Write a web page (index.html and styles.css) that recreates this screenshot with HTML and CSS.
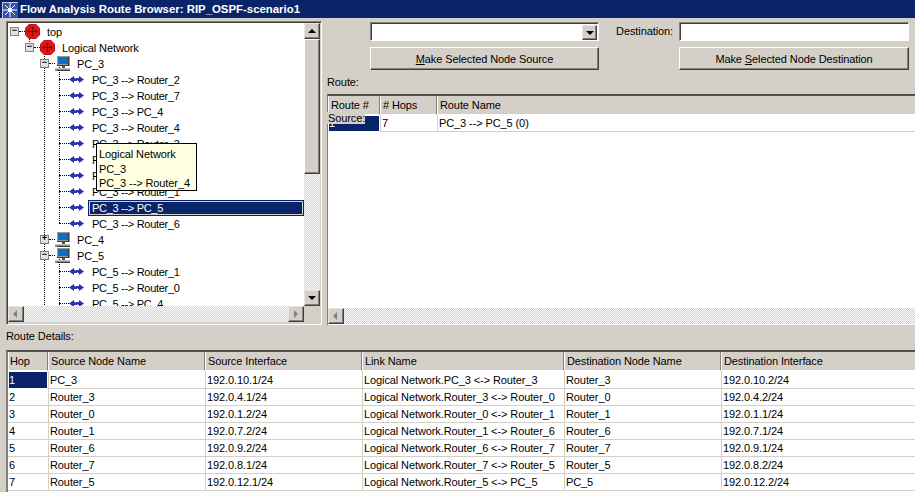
FILE: index.html
```html
<!DOCTYPE html>
<html lang="en">
<head>
<meta charset="utf-8">
<title>Flow Analysis Route Browser</title>
<link rel="stylesheet" href="styles.css">
</head>
<body>
<svg class="defs" width="0" height="0" aria-hidden="true">
  <symbol id="router" viewBox="0 0 15 15">
    <path d="M4.500 0h6L15 4.500v6L10.500 15h-6L0 10.500v-6z" fill="#e21414"/>
    <path d="M4.500 0h6L15 4.500v6L10.500 15h-6L0 10.500v-6z" fill="none" stroke="#a80808" stroke-width=".8"/>
    <path d="M7.500 3v9M3 7.500h9M6 4.500l1.500-1.500 1.500 1.500M6 10.500l1.500 1.500 1.500-1.500M4.500 6 3 7.500 4.500 9M10.500 6 12 7.500 10.500 9" fill="none" stroke="#5a0c0c" stroke-width=".9"/>
  </symbol>
  <symbol id="pc" viewBox="0 0 15 15">
    <path d="M2 0h13v10H2z" fill="#9a9a94"/>
    <path d="M3 1h10v7H3z" fill="#0f6fc6"/>
    <path d="M13 1h1v8h-1zM2 9h12v1H2z" fill="#3c3c3c"/>
    <path d="M7 10h3v2H7z" fill="#55554f"/>
    <path d="M0 12h15v3H0z" fill="#8f8f88"/>
    <path d="M0 12h15v1H0z" fill="#c8c8c0"/>
    <path d="M2 14h13v1H2z" fill="#3c3c3c"/>
  </symbol>
  <symbol id="flow" viewBox="0 0 15 7">
    <path d="M0 3.500 5 0v2h5V0l5 3.500L10 7V5H5v2z" fill="#2a2fb0"/>
    <path d="M6 2h1v1H6zM8 4h1v1H8z" fill="#a8aae4"/>
  </symbol>
</svg>

<header class="titlebar">
  <svg class="appicon" width="16" height="16" viewBox="0 0 16 16" aria-hidden="true">
    <rect width="16" height="16" fill="#3a4fb0"/>
    <rect x="0" y="0" width="16" height="1" fill="#c8c8e8"/>
    <rect x="0" y="0" width="1" height="16" fill="#c8c8e8"/>
    <path d="M8 1v14M1 8h14M3 3l10 10M13 3 3 13" stroke="#fff" stroke-width="1"/>
    <rect x="6" y="6" width="4" height="4" fill="#fff"/>
  </svg>
  <span class="titletext">Flow Analysis Route Browser: RIP_OSPF-scenario1</span>
</header>

<main class="top">
  <section class="treepanel">
    <div class="treebody">
      <div class="treeview">
        <i class="guide g-a"></i><i class="guide g-b"></i><i class="guide g-c"></i><i class="guide g-d"></i>
        <div class="row l0"><b class="exp">−</b><i class="stub"></i><svg class="ico"><use href="#router"/></svg><span class="lbl">top</span></div>
        <div class="row l1"><b class="exp">−</b><i class="stub"></i><svg class="ico"><use href="#router"/></svg><span class="lbl">Logical Network</span></div>
        <div class="row l2"><b class="exp">−</b><i class="stub"></i><svg class="ico"><use href="#pc"/></svg><span class="lbl">PC_3</span></div>
        <div class="row l3"><i class="lstub"></i><svg class="flow"><use href="#flow"/></svg><span class="leaf">PC_3 --&gt; Router_2</span></div>
        <div class="row l3"><i class="lstub"></i><svg class="flow"><use href="#flow"/></svg><span class="leaf">PC_3 --&gt; Router_7</span></div>
        <div class="row l3"><i class="lstub"></i><svg class="flow"><use href="#flow"/></svg><span class="leaf">PC_3 --&gt; PC_4</span></div>
        <div class="row l3"><i class="lstub"></i><svg class="flow"><use href="#flow"/></svg><span class="leaf">PC_3 --&gt; Router_4</span></div>
        <div class="row l3"><i class="lstub"></i><svg class="flow"><use href="#flow"/></svg><span class="leaf">PC_3 --&gt; Router_3</span></div>
        <div class="row l3"><i class="lstub"></i><svg class="flow"><use href="#flow"/></svg><span class="leaf">PC_3 --&gt; Router_0</span></div>
        <div class="row l3"><i class="lstub"></i><svg class="flow"><use href="#flow"/></svg><span class="leaf">PC_3 --&gt; Router_5</span></div>
        <div class="row l3"><i class="lstub"></i><svg class="flow"><use href="#flow"/></svg><span class="leaf">PC_3 --&gt; Router_1</span></div>
        <div class="row l3"><i class="lstub"></i><svg class="flow"><use href="#flow"/></svg><span class="leaf selected">PC_3 --&gt; PC_5</span></div>
        <div class="row l3"><i class="lstub"></i><svg class="flow"><use href="#flow"/></svg><span class="leaf">PC_3 --&gt; Router_6</span></div>
        <div class="row l2"><b class="exp">+</b><i class="stub"></i><svg class="ico"><use href="#pc"/></svg><span class="lbl">PC_4</span></div>
        <div class="row l2"><b class="exp">−</b><i class="stub"></i><svg class="ico"><use href="#pc"/></svg><span class="lbl">PC_5</span></div>
        <div class="row l3"><i class="lstub"></i><svg class="flow"><use href="#flow"/></svg><span class="leaf">PC_5 --&gt; Router_1</span></div>
        <div class="row l3"><i class="lstub"></i><svg class="flow"><use href="#flow"/></svg><span class="leaf">PC_5 --&gt; Router_0</span></div>
        <div class="row l3"><i class="lstub"></i><svg class="flow"><use href="#flow"/></svg><span class="leaf">PC_5 --&gt; PC_4</span></div>
        <div class="tooltip">Logical Network<br>PC_3<br>PC_3 --&gt; Router_4</div>
      </div>
      <div class="vscroll">
        <span class="sbtn up"></span>
        <span class="thumb"></span>
        <span class="track"></span>
        <span class="sbtn down"></span>
      </div>
    </div>
    <div class="hscroll">
      <span class="sbtn left"></span>
      <span class="track"></span>
      <span class="sbtn right"></span>
      <span class="corner"></span>
    </div>
  </section>

  <section class="routepane">
    <div class="controls">
      <div class="field combo"><span class="sbtn down"></span></div>
      <label class="destlabel">Destination:</label>
      <div class="field"></div>
      <button class="btn" type="button"><u>M</u>ake Selected Node Source</button>
      <span></span>
      <button class="btn" type="button">Make <u>S</u>elected Node Destination</button>
    </div>
    <div class="routelabel">Route:</div>
    <div class="listpanel">
      <span class="sourcelabel">Source:</span>
      <table class="grid routegrid">
        <colgroup><col class="c-route"><col class="c-hops"><col></colgroup>
        <thead><tr><th>Route #</th><th># Hops</th><th>Route Name</th></tr></thead>
        <tbody><tr><td class="sel">1</td><td>7</td><td>PC_3 --&gt; PC_5 (0)</td></tr></tbody>
      </table>
      <div class="hscroll2">
        <span class="sbtn left"></span>
        <span class="track"></span>
      </div>
    </div>
  </section>
</main>

<div class="detailslabel">Route Details:</div>
<section class="detailspanel">
  <table class="grid detailsgrid">
    <colgroup><col class="c-hop"><col class="c-node"><col class="c-node"><col class="c-link"><col class="c-node"><col></colgroup>
    <thead>
      <tr><th>Hop</th><th>Source Node Name</th><th>Source Interface</th><th>Link Name</th><th>Destination Node Name</th><th>Destination Interface</th></tr>
    </thead>
    <tbody>
      <tr><td class="sel">1</td><td>PC_3</td><td>192.0.10.1/24</td><td>Logical Network.PC_3 &lt;-&gt; Router_3</td><td>Router_3</td><td>192.0.10.2/24</td></tr>
      <tr><td>2</td><td>Router_3</td><td>192.0.4.1/24</td><td>Logical Network.Router_3 &lt;-&gt; Router_0</td><td>Router_0</td><td>192.0.4.2/24</td></tr>
      <tr><td>3</td><td>Router_0</td><td>192.0.1.2/24</td><td>Logical Network.Router_0 &lt;-&gt; Router_1</td><td>Router_1</td><td>192.0.1.1/24</td></tr>
      <tr><td>4</td><td>Router_1</td><td>192.0.7.2/24</td><td>Logical Network.Router_1 &lt;-&gt; Router_6</td><td>Router_6</td><td>192.0.7.1/24</td></tr>
      <tr><td>5</td><td>Router_6</td><td>192.0.9.2/24</td><td>Logical Network.Router_6 &lt;-&gt; Router_7</td><td>Router_7</td><td>192.0.9.1/24</td></tr>
      <tr><td>6</td><td>Router_7</td><td>192.0.8.1/24</td><td>Logical Network.Router_7 &lt;-&gt; Router_5</td><td>Router_5</td><td>192.0.8.2/24</td></tr>
      <tr><td>7</td><td>Router_5</td><td>192.0.12.1/24</td><td>Logical Network.Router_5 &lt;-&gt; PC_5</td><td>PC_5</td><td>192.0.12.2/24</td></tr>
    </tbody>
  </table>
</section>
</body>
</html>
```
FILE: styles.css
```css
* { box-sizing: border-box; }
html, body { margin: 0; height: 100%; }
body {
  width: 915px;
  height: 492px;
  overflow: hidden;
  background: #d4d0c8;
  color: #000;
  font: 11px/14px "Liberation Sans", Arial, sans-serif;
  letter-spacing: -.1px;
}
.defs { position: absolute; }

/* title bar */
.titlebar {
  height: 18px;
  background: #0a246a;
  color: #fff;
  display: flex;
  align-items: center;
  padding-left: 2px;
  gap: 2px;
}
.appicon { flex: none; margin-top: 2px; }
.titletext { font-weight: bold; font-size: 11.400px; letter-spacing: 0; }

/* top split */
.top { display: flex; padding: 3px 0 0 6px; height: 307px; }

.treepanel {
  width: 316px;
  height: 304px;
  border: 1px solid;
  border-color: #808080 #fff #fff #808080;
  display: flex;
  flex-direction: column;
  box-shadow: inset 1px 1px 0 #404040;
  padding: 1px 1px 0 1px;
  flex: none;
}
.treebody { display: flex; height: 283px; background: #fff; }
.treeview {
  position: relative;
  width: 296px;
  height: 283px;
  overflow: hidden;
  padding-top: 1px;
  flex: none;
}
.guide { position: absolute; width: 0; border-left: 1px dotted #000; }
.g-a { left: 21px; top: 12px; height: 9px; }
.g-b { left: 36px; top: 28px; height: 260px; }
.g-c { left: 51px; top: 44px; height: 156px; }
.g-d { left: 51px; top: 236px; height: 50px; }

.row { position: relative; display: flex; align-items: center; height: 16px; white-space: nowrap; }
.l0 { padding-left: 2px; }
.l1 { padding-left: 17px; }
.l2 { padding-left: 32px; }
.l3 { padding-left: 51px; }
.exp {
  flex: none;
  width: 9px;
  height: 9px;
  margin-top: -2px;
  border: 1px solid #808080;
  background: #e4e2dc;
  font: bold 9px/7px "Liberation Mono", monospace;
  letter-spacing: 0;
  text-align: center;
  color: #000;
}
.stub { flex: none; width: 6px; border-top: 1px dotted #000; margin-top: -2px; }
.ico { flex: none; width: 15px; height: 15px; margin-top: -2px; }
.lbl { margin-left: 7px; }
.lstub { flex: none; width: 10px; border-top: 1px dotted #000; margin-top: -2px; }
.flow { flex: none; width: 15px; height: 7px; margin-top: -2px; }
.leaf { margin-left: 4px; padding-left: 4px; height: 16px; line-height: 16px; letter-spacing: -.3px; }
.selected {
  flex: 1;
  background: #0a246a;
  color: #fff;
  outline: 1px solid #d4d0c8;
  outline-offset: -2px;
}
.tooltip {
  position: absolute;
  left: 88px;
  top: 120px;
  width: 101px;
  height: 48px;
  padding: 3px 0 0 2px;
  background: #ffffe1;
  border: 1px solid #000;
  line-height: 14.500px;
  white-space: nowrap;
}

/* scrollbars */
.vscroll { width: 16px; display: flex; flex-direction: column; flex: none; }
.hscroll, .hscroll2 { display: flex; height: 16px; flex: none; background: #fff; }
.track {
  flex: 1;
  background: repeating-conic-gradient(#d4d0c8 0 25%, #fff 0 50%) 0 0 / 2px 2px;
}
.thumb, .sbtn, .corner { display: block; flex: none; background: #d4d0c8; }
.thumb {
  height: 135px;
  border: 1px solid;
  border-color: #fff #404040 #404040 #fff;
  box-shadow: inset -1px -1px 0 #808080;
}
.sbtn {
  position: relative;
  width: 16px;
  height: 16px;
  border: 1px solid;
  border-color: #e8e6e0 #404040 #404040 #e8e6e0;
  box-shadow: inset -1px -1px 0 #808080;
}
.sbtn::after {
  content: "";
  position: absolute;
  left: 3px;
  top: 5px;
  border: 4px solid transparent;
}
.sbtn.up::after { top: 1px; border-bottom-color: #000; }
.sbtn.down::after { top: 5px; border-top-color: #000; }
.sbtn.left::after { left: 0; top: 3px; border-right-color: #808080; }
.sbtn.right::after { left: 5px; top: 3px; border-left-color: #808080; }
.corner { width: 16px; height: 16px; background: #d4d0c8; }

/* right pane */
.routepane { flex: 1; min-width: 0; margin-left: 5px; display: flex; flex-direction: column; margin-top: 1px; }
.controls {
  display: grid;
  grid-template-columns: 229px 80px 230px;
  grid-template-rows: 19px 23px;
  row-gap: 6px;
  padding-left: 43px;
}
.field {
  position: relative;
  background: #fff;
  border: 1px solid;
  border-color: #808080 #fff #fff #808080;
  box-shadow: inset 1px 1px 0 #404040;
}
.combo .sbtn { position: absolute; right: 1px; top: 2px; width: 15px; height: 15px; }
.destlabel { text-align: right; padding-right: 6px; line-height: 19px; }
.btn {
  padding: 0;
  font: inherit;
  letter-spacing: inherit;
  color: #000;
  background: #d4d0c8;
  border: 1px solid;
  border-color: #fff #404040 #404040 #fff;
  box-shadow: inset -1px -1px 0 #808080;
}
.routelabel { height: 24px; padding-top: 5px; line-height: 14px; }
.listpanel {
  position: relative;
  height: 231px;
  background: #fff;
  border-top: 2px solid #505050;
  border-left: 1px solid #808080;
  display: flex;
  flex-direction: column;
  justify-content: space-between;
}
.sourcelabel {
  position: absolute;
  left: -1px;
  top: 16px;
  width: 38px;
  height: 12px;
  padding-left: 1px;
  line-height: 12px;
  background: #d4d0c8;
  z-index: 1;
}
.hscroll2 { background: #d4d0c8; margin-bottom: 1px; }

/* grids */
.grid { border-collapse: separate; border-spacing: 0; table-layout: fixed; width: 100%; }
.grid th {
  height: 19px;
  padding: 0 0 1px 3px;
  font-weight: normal;
  text-align: left;
  background: #d4d0c8;
  border-right: 1px solid #808080;
  border-bottom: 1px solid #fff;
  box-shadow: inset 1px 0 0 #fff;
  white-space: nowrap;
}
.grid th:last-child { border-right: 0; }
.detailsgrid th:first-child { padding-left: 2px; }
.grid td {
  height: 17px;
  padding: 0 0 0 1px;
  background: #fff;
  border-left: 1px solid #d4d0c8;
  border-bottom: 1px solid #d4d0c8;
  white-space: nowrap;
}
.grid td:first-child { border-left: 0; }
.grid td.sel { background: #0a246a; color: #fff; outline: 1px solid #fff; outline-offset: -1px; }
.c-route { width: 52px; }
.c-hops { width: 57px; }
.c-hop { width: 40px; }
.c-node { width: 157px; }
.c-link { width: 202px; }

/* details */
.detailslabel { height: 25px; padding: 4px 0 0 6px; }
.detailspanel {
  margin-left: 6px;
  height: 142px;
  background: #fff;
  border-top: 2px solid #505050;
  border-left: 2px solid #808080;
}
.detailsgrid tbody tr:first-child td { height: 18px; }
```
